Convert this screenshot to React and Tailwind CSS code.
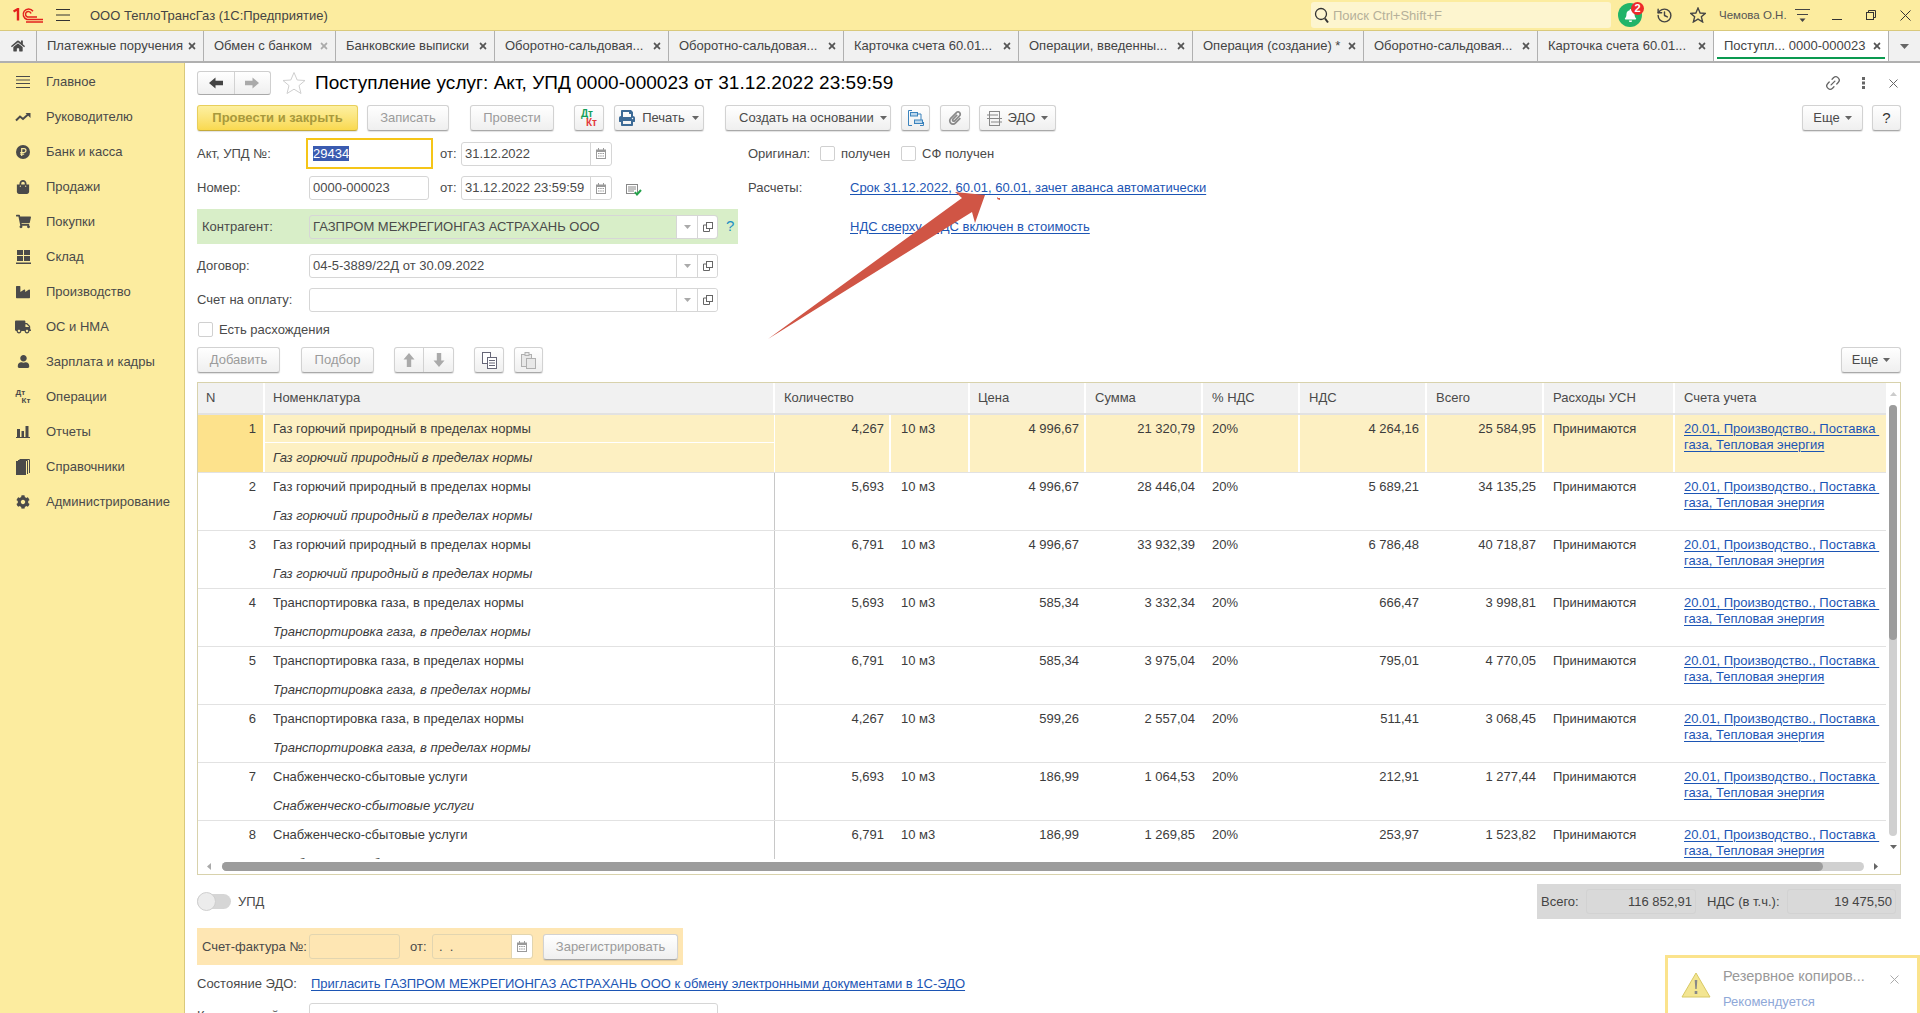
import React from "react";
import {
  FaHome,
  FaShoppingBag,
  FaShoppingCart,
  FaIndustry,
  FaTruck,
  FaUser,
  FaCog,
  FaPrint,
  FaPaperclip,
  FaBell,
  FaTimes,
} from "react-icons/fa";
import { FiLink2 } from "react-icons/fi";
import { LuHistory } from "react-icons/lu";

const tabs = [
  { title: "Платежные поручения", w: "w-[167px]" },
  { title: "Обмен с банком", w: "w-[132px]", faint: true },
  { title: "Банковские выписки", w: "w-[159px]" },
  { title: "Оборотно-сальдовая...", w: "w-[174px]" },
  { title: "Оборотно-сальдовая...", w: "w-[175px]" },
  { title: "Карточка счета 60.01...", w: "w-[175px]" },
  { title: "Операции, введенны...", w: "w-[174px]" },
  { title: "Операция (создание) *", w: "w-[171px]" },
  { title: "Оборотно-сальдовая...", w: "w-[174px]" },
  { title: "Карточка счета 60.01...", w: "w-[176px]" },
];

const GAS = "Газ горючий природный в пределах нормы";
const TRANS = "Транспортировка газа, в пределах нормы";
const SUPPLY = "Снабженческо-сбытовые услуги";

const rows = [
  [1, GAS, "4,267", "4 996,67", "21 320,79", "4 264,16", "25 584,95"],
  [2, GAS, "5,693", "4 996,67", "28 446,04", "5 689,21", "34 135,25"],
  [3, GAS, "6,791", "4 996,67", "33 932,39", "6 786,48", "40 718,87"],
  [4, TRANS, "5,693", "585,34", "3 332,34", "666,47", "3 998,81"],
  [5, TRANS, "6,791", "585,34", "3 975,04", "795,01", "4 770,05"],
  [6, TRANS, "4,267", "599,26", "2 557,04", "511,41", "3 068,45"],
  [7, SUPPLY, "5,693", "186,99", "1 064,53", "212,91", "1 277,44"],
  [8, SUPPLY, "6,791", "186,99", "1 269,85", "253,97", "1 523,82"],
];

function LinesIcon() {
  return (
    <svg width="14" height="14" viewBox="0 0 14 14" stroke="#4a4a4a" strokeWidth="1">
      <path d="M0 1.5h14M0 5h14M0 8.5h14M0 12.5h14" />
    </svg>
  );
}

function TrendIcon() {
  return (
    <svg width="16" height="10" viewBox="0 0 16 10" fill="none">
      <path d="M1 8.5 5 4.5 8 7l5-4.5" stroke="#4a4a4a" strokeWidth="2" />
      <path d="M10.5 1H15.5V6Z" fill="#4a4a4a" />
    </svg>
  );
}

function RubleIcon() {
  return (
    <svg width="14" height="14" viewBox="0 0 14 14">
      <circle cx="7" cy="7" r="7" fill="#4a4a4a" />
      <path d="M5.7 11V3.6H8a1.9 1.9 0 0 1 0 3.9H4.2M4.2 9.2h4" stroke="#fcec9f" strokeWidth="1.2" fill="none" />
    </svg>
  );
}

function StockIcon() {
  return (
    <svg width="15" height="14" viewBox="0 0 15 14" fill="#4a4a4a">
      <rect x="1" y="0" width="6" height="5" />
      <rect x="8" y="0" width="6" height="5" />
      <rect x="1" y="6" width="6" height="5" />
      <rect x="8" y="6" width="6" height="5" />
      <rect x="0" y="12.5" width="15" height="1.5" />
    </svg>
  );
}

function BarsIcon() {
  return (
    <svg width="14" height="12" viewBox="0 0 14 12" fill="#4a4a4a">
      <rect x="1" y="3" width="3" height="8" />
      <rect x="5.5" y="5" width="2.5" height="6" />
      <rect x="9.5" y="0" width="3" height="11" />
      <rect x="0" y="11" width="14" height="1" />
    </svg>
  );
}

function BooksIcon() {
  return (
    <svg width="14" height="16" viewBox="0 0 14 16">
      <rect x="0" y="2" width="10" height="14" fill="#4a4a4a" />
      <path d="M2 1.5h9.5V15M3.5.5h10V14" fill="none" stroke="#4a4a4a" strokeWidth="1" />
    </svg>
  );
}

function DebitCreditIcon({ big }) {
  if (big) {
    return (
      <div className="flex flex-col text-[10px] font-bold leading-[9px]">
        <span className="text-[#12a05a]">Дт</span>
        <span className="ml-[5px] text-[#e23a3a]">Кт</span>
      </div>
    );
  }
  return (
    <div className="flex flex-col text-[8px] font-bold leading-[8px] text-[#4a4a4a]">
      <span>Дт</span>
      <span className="ml-[6px]">Кт</span>
    </div>
  );
}

// толстая стрелка как в кнопках 1С, остальные направления поворотом
function FatArrow({ color = "#444", className = "" }) {
  return (
    <svg width="14" height="12" viewBox="0 0 14 12" className={className}>
      <path d="M0 6 6.500 .5V3.800H14V8.200H6.500V11.500Z" fill={color} />
    </svg>
  );
}

function Star({ size, color, width = 1 }) {
  return (
    <svg width={size} height={size} viewBox="0 0 24 24" fill="none" stroke={color} strokeWidth={width} className="shrink-0">
      <path d="M12 1.500 15.200 9 23 9.500 17 14.600 19 22.500 12 18.200 5 22.500 7 14.600 1 9.500 8.800 9Z" />
    </svg>
  );
}

const menu = [
  ["Главное", <LinesIcon />],
  ["Руководителю", <TrendIcon />],
  ["Банк и касса", <RubleIcon />],
  ["Продажи", <FaShoppingBag size={14} color="#4a4a4a" />],
  ["Покупки", <FaShoppingCart size={15} color="#4a4a4a" />],
  ["Склад", <StockIcon />],
  ["Производство", <FaIndustry size={14} color="#4a4a4a" />],
  ["ОС и НМА", <FaTruck size={16} color="#4a4a4a" />],
  ["Зарплата и кадры", <FaUser size={13} color="#4a4a4a" />],
  ["Операции", <DebitCreditIcon />],
  ["Отчеты", <BarsIcon />],
  ["Справочники", <BooksIcon />],
  ["Администрирование", <FaCog size={14} color="#4a4a4a" />],
];

function Caret({ color = "#666" }) {
  return (
    <svg width="7" height="4" viewBox="0 0 7 4" className="shrink-0">
      <path d="M0 0h7L3.500 4Z" fill={color} />
    </svg>
  );
}

function Btn({ className = "", muted, children }) {
  return (
    <div
      className={`flex h-[26px] shrink-0 items-center justify-center rounded-[3px] border border-[#d2d2d2] border-b-[#a9a9a9] bg-linear-to-b from-white to-[#efefef] shadow-[0_1px_1px_rgba(0,0,0,0.12)] ${
        muted ? "text-[#9b9b9b]" : "text-[#4a4a4a]"
      } ${className}`}
    >
      {children}
    </div>
  );
}

function Calendar() {
  return (
    <svg width="10" height="11" viewBox="0 0 10 11" fill="#9a9a9a">
      <path d="M0 1.500h2V0h1v1.500h4V0h1v1.500h2V11H0Zm1 2.500v6h8V4Z" />
      <path d="M2 5h1.500v1H2zM4.200 5h1.500v1H4.200zM6.500 5H8v1H6.500zM2 7.500h1.500v1H2zM4.200 7.500h1.500v1H4.200zM6.500 7.500H8v1H6.500z" />
    </svg>
  );
}

function OpenIcon() {
  return (
    <svg width="10" height="10" viewBox="0 0 10 10" fill="none" stroke="#666" strokeWidth="1">
      <rect x="3.500" y="0.500" width="6" height="6" />
      <path d="M3 3H0.500V9.500H6.500V7" />
    </svg>
  );
}

function DateField({ value }) {
  return (
    <div className="flex h-[24px] w-[151px] items-center rounded-[3px] border border-[#d6d6d6] bg-white">
      <span className="flex-1 pl-[3px]">{value}</span>
      <div className="flex h-full w-[21px] items-center justify-center border-l border-[#d6d6d6]">
        <Calendar />
      </div>
    </div>
  );
}

function SelectField({ value, className = "bg-white" }) {
  return (
    <div className={`flex h-[24px] w-[409px] items-center rounded-[3px] border border-[#d6d6d6] ${className}`}>
      <span className="flex-1 pl-[3px]">{value}</span>
      <div className="flex h-full w-[21px] items-center justify-center border-l border-[#d6d6d6] bg-white">
        <Caret color="#aaa" />
      </div>
      <div className="flex h-full w-[20px] items-center justify-center rounded-r-[3px] border-l border-[#d6d6d6] bg-white">
        <OpenIcon />
      </div>
    </div>
  );
}

function Check() {
  return <div className="h-[15px] w-[15px] shrink-0 rounded-[2px] border border-[#d0d0d0] bg-white" />;
}

function TopBar() {
  return (
    <div className="flex h-[31px] shrink-0 items-center border-b border-[#d9c97c] bg-[#fcec9f]">
      <svg width="30" height="15" viewBox="0 0 30 15" fill="none" stroke="#e3211c" className="ml-[13px]">
        <path d="M.5 3.500 5 1v11.500" strokeWidth="2.400" />
        <path d="M20 3.200A5.400 5.400 0 1 0 14 11.500H30" strokeWidth="1.500" />
        <path d="M18 5.500A2.800 2.800 0 1 0 14.500 9H24" strokeWidth="1.500" />
        <path d="M13 14H30" strokeWidth="1.500" />
      </svg>
      <svg width="14" height="12" viewBox="0 0 14 12" stroke="#333" strokeWidth="1" className="ml-[13px]">
        <path d="M0 .5h14M0 6h14M0 11.500h14" />
      </svg>
      <span className="ml-[20px] mt-[2px] w-[1221px] whitespace-pre text-[#444]">ООО ТеплоТрансГаз (1С:Предприятие)</span>
      <div className="flex h-[26px] w-[300px] items-center rounded-[3px] bg-[#fdf5cf] pl-[3px]">
        <svg width="16" height="17" viewBox="0 0 16 17" fill="none" stroke="#333" strokeWidth="1.300">
          <circle cx="7" cy="7" r="5.500" />
          <path d="M11 11.500l3 4" strokeWidth="2" />
        </svg>
        <span className="ml-[3px] mt-[1px] text-[#b5b09a]">Поиск Ctrl+Shift+F</span>
      </div>
      <div className="relative ml-[7px] flex h-[24px] w-[24px] items-center justify-center rounded-full bg-[#21b469]">
        <FaBell size={13} color="#fff" />
        <span className="absolute -right-[2px] -top-[1px] flex h-[13px] w-[13px] items-center justify-center rounded-full bg-[#ee2a2a] text-[11px] font-bold leading-none text-white">
          2
        </span>
      </div>
      <LuHistory size={17} color="#444" className="ml-[14px]" />
      <div className="ml-[17px]">
        <Star size={16} color="#444" width={2} />
      </div>
      <span className="ml-[13px] mt-[2px] w-[76px] text-[11.5px] text-[#555]">Чемова О.Н.</span>
      <svg width="15" height="13" viewBox="0 0 15 13">
        <path d="M0 .5h15M2 5.500h11" stroke="#444" strokeWidth="1" />
        <path d="M4.500 9.500h6L7.500 13Z" fill="#444" />
      </svg>
      <div className="ml-[22px] mt-[9px] h-[1px] w-[10px] bg-[#333]" />
      <svg width="10" height="10" viewBox="0 0 10 10" fill="none" stroke="#333" className="ml-[24px]">
        <rect x="0.500" y="2.500" width="7" height="7" />
        <path d="M2.500 2.500V.5h7v7H7.500" />
      </svg>
      <svg width="11" height="11" viewBox="0 0 11 11" stroke="#333" className="ml-[24px]">
        <path d="M.5.5l10 10M10.500.5l-10 10" />
      </svg>
    </div>
  );
}

function TabBar() {
  return (
    <div className="flex h-[32px] shrink-0 border-b-2 border-[#b0b0b0] bg-[#f1f1f1] text-[#444]">
      <div className="flex w-[37px] items-center justify-center border-r border-[#b0b0b0]">
        <FaHome size={14} color="#4a4a4a" />
      </div>
      {tabs.map((t, i) => (
        <div key={i} className={`flex items-center justify-between border-r border-[#b0b0b0] pl-[10px] pr-[6px] ${t.w}`}>
          <span className="whitespace-nowrap">{t.title}</span>
          <FaTimes size={10} color={t.faint ? "#aaa" : "#555"} />
        </div>
      ))}
      <div className="relative flex w-[175px] items-center justify-between border-r border-[#b0b0b0] bg-white pl-[10px] pr-[6px]">
        <span className="whitespace-pre">Поступл... 0000-000023</span>
        <FaTimes size={10} color="#555" />
        <div className="absolute bottom-[2px] left-[3px] right-[3px] h-[2px] bg-[#0a9a50]" />
      </div>
      <div className="flex flex-1 items-center justify-center">
        <svg width="9" height="5" viewBox="0 0 9 5"><path d="M0 0h9L4.500 5Z" fill="#666" /></svg>
      </div>
    </div>
  );
}

function Sidebar() {
  return (
    <div className="flex w-[185px] shrink-0 flex-col border-r border-[#d9c97c] bg-[#fcec9f] pt-[1px] text-[#4a4a4a]">
      {menu.map(([label, icon]) => (
        <div key={label} className="flex h-[35px] items-center">
          <div className="flex w-[46px] justify-center">{icon}</div>
          <span>{label}</span>
        </div>
      ))}
    </div>
  );
}

function Form() {
  return (
    <div className="mt-[7px] flex shrink-0">
      <div className="flex w-[551px] shrink-0 flex-col">
        <div className="flex h-[31px] items-center">
          <span className="w-[109px]">Акт, УПД №:</span>
          <div className="flex h-[31px] w-[127px] items-center border-2 border-[#f5c518] bg-white pl-[5px]">
            <span className="bg-[#3a5bb0] leading-[15px] text-white">29434</span>
          </div>
          <span className="ml-[7px] w-[21px]">от:</span>
          <DateField value="31.12.2022" />
        </div>
        <div className="mt-[7px] flex h-[24px] items-center">
          <span className="w-[112px]">Номер:</span>
          <div className="flex h-[24px] w-[120px] items-center rounded-[3px] border border-[#d6d6d6] pl-[3px]">0000-000023</div>
          <span className="ml-[11px] w-[21px]">от:</span>
          <DateField value="31.12.2022 23:59:59" />
          <svg width="16" height="12" viewBox="0 0 16 12" fill="none" className="ml-[14px] mt-[3px]">
            <rect x="0.500" y="0.500" width="11" height="9" stroke="#888" />
            <path d="M2 3h8M2 5h8M2 7h6" stroke="#888" />
            <path d="M9 8l2 2.500L15 6" stroke="#22a24a" strokeWidth="2" />
          </svg>
        </div>
        <div className="mt-[9px] flex h-[35px] w-[541px] items-center bg-[#d8eec8] pl-[5px]">
          <span className="w-[107px]">Контрагент:</span>
          <SelectField value="ГАЗПРОМ МЕЖРЕГИОНГАЗ АСТРАХАНЬ ООО" className="bg-[#d8eec8]" />
          <span className="ml-[8px] text-[15px] text-[#1d8fc4]">?</span>
        </div>
        <div className="mt-[10px] flex h-[24px] items-center">
          <span className="w-[112px]">Договор:</span>
          <SelectField value="04-5-3889/22Д от 30.09.2022" />
        </div>
        <div className="mt-[10px] flex h-[24px] items-center">
          <span className="w-[112px]">Счет на оплату:</span>
          <SelectField value="" />
        </div>
        <div className="ml-[1px] mt-[10px] flex h-[15px] items-center">
          <Check />
          <span className="ml-[6px]">Есть расхождения</span>
        </div>
      </div>
      <div className="flex flex-col">
        <div className="flex h-[31px] items-center">
          <span className="w-[72px]">Оригинал:</span>
          <Check />
          <span className="ml-[6px] w-[60px]">получен</span>
          <Check />
          <span className="ml-[6px]">СФ получен</span>
        </div>
        <div className="mt-[7px] flex h-[24px] items-center">
          <span className="w-[102px]">Расчеты:</span>
          <a className="text-[#1c55b4] underline underline-offset-2">Срок 31.12.2022, 60.01, 60.01, зачет аванса автоматически</a>
        </div>
        <div className="mt-[9px] flex h-[35px] items-center pl-[102px]">
          <a className="whitespace-pre text-[#1c55b4] underline underline-offset-2">НДС сверху,  НДС включен в стоимость</a>
        </div>
      </div>
    </div>
  );
}

function TableBar() {
  return (
    <div className="mt-[10px] flex shrink-0">
      <Btn muted className="w-[83px]">Добавить</Btn>
      <Btn muted className="ml-[21px] w-[73px]">Подбор</Btn>
      <Btn className="ml-[20px] w-[60px]">
        <div className="flex h-full w-[30px] items-center justify-center border-r border-[#d2d2d2]">
          <FatArrow color="#aaa" className="rotate-90" />
        </div>
        <div className="flex h-full w-[30px] items-center justify-center">
          <FatArrow color="#aaa" className="-rotate-90" />
        </div>
      </Btn>
      <Btn className="ml-[20px] w-[30px] border-[#b5b5b5]">
        <svg width="15" height="17" viewBox="0 0 15 17" fill="#fff" stroke="#667">
          <rect x="0.500" y="0.500" width="8" height="11" />
          <rect x="5.500" y="5.500" width="9" height="11" />
          <path d="M7 8.500h6M7 11h6M7 13.500h6" />
        </svg>
      </Btn>
      <Btn className="ml-[10px] w-[29px]">
        <svg width="15" height="17" viewBox="0 0 15 17" fill="#e8e8e8" stroke="#b0b0b0">
          <rect x="0.500" y="2.500" width="10" height="12" />
          <rect x="4" y="0.500" width="4" height="3" />
          <rect x="5.500" y="6.500" width="9" height="10" />
        </svg>
      </Btn>
      <Btn className="ml-auto w-[60px] gap-[5px]">Еще <Caret /></Btn>
    </div>
  );
}

const sep = "shadow-[inset_-2px_0_0_#fff]";

function TableHead() {
  const cell = "flex items-center border-r-2 border-white";
  return (
    <div className="flex h-[32px] shrink-0 border-b-2 border-[#e2e2e2] bg-[#f1f1f1] text-[#4a4a4a]">
      <div className={`${cell} w-[67px] pl-[8px]`}>N</div>
      <div className={`${cell} w-[510px] pl-[8px]`}>Номенклатура</div>
      <div className={`${cell} w-[195px] pl-[9px]`}>Количество</div>
      <div className={`${cell} w-[116px] pl-[8px]`}>Цена</div>
      <div className={`${cell} w-[117px] pl-[9px]`}>Сумма</div>
      <div className={`${cell} w-[97px] pl-[9px]`}>% НДС</div>
      <div className={`${cell} w-[127px] pl-[9px]`}>НДС</div>
      <div className={`${cell} w-[117px] pl-[9px]`}>Всего</div>
      <div className={`${cell} w-[131px] pl-[9px]`}>Расходы УСН</div>
      <div className="flex w-[211px] items-center pl-[9px]">Счета учета</div>
    </div>
  );
}

function Row({ r, active }) {
  const [n, name, qty, price, sum, vat, total] = r;
  const div = active ? sep : "";
  const num = "pt-[6px] text-right leading-[16px]";
  const txt = "pl-[9px] pt-[6px] leading-[16px]";
  return (
    <div className={`flex h-[58px] shrink-0 border-b border-[#e2e2e2] text-[#3c3c3c] ${active ? "bg-[#fdf0c2]" : "bg-white"}`}>
      <div className={`w-[67px] pr-[9px] ${num} ${active ? "bg-[#fde28c] " + sep : ""}`}>{n}</div>
      <div className={`flex w-[510px] flex-col border-r ${active ? "border-r-white" : "border-r-[#c8c8c8]"}`}>
        <div className={`h-[28px] pl-[8px] pt-[6px] leading-[16px] ${active ? "border-b border-white" : ""}`}>{name}</div>
        <div className="pl-[8px] pt-[7px] italic leading-[16px]">{name}</div>
      </div>
      <div className={`w-[116px] pr-[7px] ${num} ${div}`}>{qty}</div>
      <div className={`w-[79px] pl-[10px] pt-[6px] leading-[16px] ${div}`}>10 м3</div>
      <div className={`w-[116px] pr-[7px] ${num} ${div}`}>{price}</div>
      <div className={`w-[117px] pr-[8px] ${num} ${div}`}>{sum}</div>
      <div className={`w-[97px] ${txt} ${div}`}>20%</div>
      <div className={`w-[127px] pr-[8px] ${num} ${div}`}>{vat}</div>
      <div className={`w-[117px] pr-[8px] ${num} ${div}`}>{total}</div>
      <div className={`w-[131px] ${txt} ${div}`}>Принимаются</div>
      <div className="w-[211px] whitespace-pre pl-[9px] pt-[6px] leading-[16px] text-[#1c55b4]">
        <a className="underline underline-offset-2">{"20.01, Производство., Поставка "}</a>
        <br />
        <a className="underline underline-offset-2">газа, Тепловая энергия</a>
      </div>
    </div>
  );
}

function Table() {
  return (
    <div className="mt-[9px] flex h-[493px] shrink-0 flex-col border border-[#d8d2ac]">
      <div className="flex h-[476px]">
        <div className="flex w-[1688px] flex-col overflow-hidden">
          <TableHead />
          {rows.map((r, i) => (
            <Row key={r[0]} r={r} active={i === 0} />
          ))}
        </div>
        <div className="flex w-[14px] flex-col items-center pt-[9px]">
          <svg width="7" height="4" viewBox="0 0 7 4"><path d="M0 4h7L3.500 0Z" fill="#ccc" /></svg>
          <div className="mt-[9px] flex h-[431px] w-[8px] flex-col rounded-full bg-[#d0d0d0]">
            <div className="h-[235px] w-[8px] rounded-full bg-[#9c9c9c]" />
          </div>
          <svg width="7" height="4" viewBox="0 0 7 4" className="mt-[9px]"><path d="M0 0h7L3.500 4Z" fill="#666" /></svg>
        </div>
      </div>
      <div className="flex h-[15px] items-center pl-[9px]">
        <svg width="4" height="7" viewBox="0 0 4 7"><path d="M4 0v7L0 3.500Z" fill="#aaa" /></svg>
        <div className="ml-[11px] h-[9px] w-[1642px] rounded-full bg-[#d0d0d0]">
          <div className="h-[9px] w-[1601px] rounded-full bg-[#9c9c9c]" />
        </div>
        <svg width="4" height="7" viewBox="0 0 4 7" className="ml-[10px]"><path d="M0 0v7l4-3.500Z" fill="#666" /></svg>
      </div>
    </div>
  );
}

function Totals() {
  return (
    <div className="mt-[9px] flex h-[35px] shrink-0 items-start justify-between">
      <div className="mt-[8px] flex h-[19px] items-center">
        <div className="flex h-[15px] w-[34px] items-center rounded-full bg-[#d6d6d6]">
          <div className="h-[19px] w-[19px] shrink-0 rounded-full border border-[#cfcfcf] bg-[#ececec]" />
        </div>
        <span className="ml-[7px]">УПД</span>
      </div>
      <div className="flex h-[35px] w-[364px] items-center bg-[#d9d9d9] pl-[4px] pr-[5px] text-[#444]">
        <span className="w-[45px]">Всего:</span>
        <div className="h-[25px] w-[110px] rounded-[3px] border border-[#d2d2d2] pr-[3px] text-right leading-[23px]">116 852,91</div>
        <span className="ml-[11px] w-[80px]">НДС (в т.ч.):</span>
        <div className="h-[25px] w-[109px] rounded-[3px] border border-[#d2d2d2] pr-[3px] text-right leading-[23px]">19 475,50</div>
      </div>
    </div>
  );
}

function Invoice() {
  return (
    <div className="mt-[9px] flex h-[37px] w-[486px] shrink-0 items-center bg-[#fee6b3] pl-[5px]">
      <span className="w-[107px] whitespace-nowrap">Счет-фактура №:</span>
      <div className="h-[25px] w-[91px] rounded-[3px] border border-[#e2d5b0] bg-[#fee6b3]" />
      <span className="ml-[10px] w-[22px]">от:</span>
      <div className="flex h-[25px] w-[101px] items-center rounded-[3px] border border-[#e2d5b0]">
        <span className="flex-1 whitespace-pre pl-[6px]">.  .</span>
        <div className="flex h-full w-[21px] items-center justify-center rounded-r-[3px] border-l border-[#e2d5b0] bg-white">
          <Calendar />
        </div>
      </div>
      <Btn muted className="ml-[10px] w-[135px]">Зарегистрировать</Btn>
    </div>
  );
}

export default function App() {
  return (
    <div className="relative flex h-[1013px] w-[1920px] flex-col overflow-hidden bg-white font-['Liberation_Sans',Arial,sans-serif] text-[13px] text-[#4a4a4a]">
      <TopBar />
      <TabBar />
      <div className="flex min-h-0 flex-1">
        <Sidebar />
        <div className="flex min-w-0 flex-1 flex-col pl-[12px] pr-[19px]">
          <div className="mt-[8px] flex h-[24px] shrink-0 items-center">
            <div className="flex h-[24px] w-[74px] rounded-[3px] border border-[#cfcfcf] border-b-[#a9a9a9] bg-linear-to-b from-white to-[#efefef]">
              <div className="flex w-[37px] items-center justify-center border-r border-[#d2d2d2]">
                <FatArrow color="#444" />
              </div>
              <div className="flex w-[36px] items-center justify-center">
                <FatArrow color="#aaa" className="rotate-180" />
              </div>
            </div>
            <div className="ml-[11px]">
              <Star size={24} color="#cfcfcf" />
            </div>
            <h1 className="ml-[9px] text-[19px] font-normal tracking-[0.04px] text-black">Поступление услуг: Акт, УПД 0000-000023 от 31.12.2022 23:59:59</h1>
            <FiLink2 size={16} color="#666" className="ml-auto mr-[21px] -rotate-45" />
            <svg width="3" height="12" viewBox="0 0 3 12" fill="#666" className="mr-[24px]">
              <rect y="0" width="3" height="3" />
              <rect y="4.500" width="3" height="3" />
              <rect y="9" width="3" height="3" />
            </svg>
            <svg width="9" height="9" viewBox="0 0 9 9" stroke="#666" className="mr-[3px]">
              <path d="M.5.5l8 8M8.500.5l-8 8" />
            </svg>
          </div>

          <div className="mt-[10px] flex shrink-0">
            <div className="flex h-[26px] w-[161px] shrink-0 items-center justify-center rounded-[3px] border border-[#e8cf5c] border-b-[#c4aa3a] bg-linear-to-b from-[#fdf0a0] to-[#f9d94e] font-bold text-[#a8993c] shadow-[0_1px_1px_rgba(0,0,0,0.12)]">
              Провести и закрыть
            </div>
            <Btn muted className="ml-[9px] w-[82px]">Записать</Btn>
            <Btn muted className="ml-[21px] w-[84px]">Провести</Btn>
            <Btn className="ml-[20px] w-[30px]"><DebitCreditIcon big /></Btn>
            <Btn className="ml-[10px] w-[90px] gap-[7px]">
              <FaPrint size={16} color="#3c6a96" />
              Печать
              <Caret />
            </Btn>
            <Btn className="ml-[21px] w-[166px] justify-start gap-[6px] pl-[13px]">Создать на основании <Caret /></Btn>
            <Btn className="ml-[10px] w-[29px]">
              <svg width="16" height="16" viewBox="0 0 16 16" fill="none" stroke="#3b83bd">
                <path d="M4 .5H.5V15.500H4M12 15.500h3.500V12" />
                <rect x="2.500" y="2.500" width="7" height="3.500" fill="#bcd7ec" />
                <rect x="6.500" y="10" width="8" height="3.500" fill="#bcd7ec" />
                <path d="M9.500 4H13v6" />
              </svg>
            </Btn>
            <Btn className="ml-[10px] w-[30px]"><FaPaperclip size={14} color="#8a8a8a" /></Btn>
            <Btn className="ml-[9px] w-[77px] gap-[6px]">
              <svg width="15" height="15" viewBox="0 0 15 15" fill="none" stroke="#888">
                <rect x="2.500" y="0.500" width="10" height="14" />
                <path d="M0 4h5M0 7.500h15M10 11h5M5 4h6M4 11h6" />
              </svg>
              ЭДО
              <Caret />
            </Btn>
            <Btn className="ml-auto w-[61px] gap-[5px]">Еще <Caret /></Btn>
            <Btn className="ml-[9px] w-[29px] text-[15px] text-[#333]">?</Btn>
          </div>

          <Form />
          <TableBar />
          <Table />
          <Totals />
          <Invoice />
          <div className="mt-[10px] flex h-[18px] shrink-0 items-center">
            <span className="w-[114px]">Состояние ЭДО:</span>
            <a className="text-[#1c55b4] underline underline-offset-2">Пригласить ГАЗПРОМ МЕЖРЕГИОНГАЗ АСТРАХАНЬ ООО к обмену электронными документами в 1С-ЭДО</a>
          </div>
          <div className="mt-[10px] flex shrink-0 items-start">
            <span className="mt-[3px] w-[112px]">Комментарий:</span>
            <div className="h-[24px] w-[409px] shrink-0 rounded-[3px] border border-[#d6d6d6]" />
          </div>
        </div>
      </div>

      {/* стрелка поверх формы */}
      <svg width="1920" height="1013" viewBox="0 0 1920 1013" className="pointer-events-none absolute left-0 top-0">
        <path d="M768 339 962 198 955 192 985 195 975 223 972 212Z" fill="#d05545" />
        <path d="M997 197l3 1 0 2-3-1 1-2" fill="#d05545" />
      </svg>

      {/* уведомление */}
      <div className="absolute left-[1665px] top-[955px] flex h-[58px] w-[255px] items-start border-[3px] border-b-0 border-[#fbe38c] bg-white pl-[13px] pt-[14px]">
        <svg width="30" height="26" viewBox="0 0 30 26" className="shrink-0">
          <path d="M15 1 29 25H1Z" fill="#f3e591" stroke="#d8c964" />
          <path d="M13.700 8h2.600l-.6 9h-1.400ZM13.700 19h2.600v3h-2.600Z" fill="#888" />
        </svg>
        <div className="ml-[12px] flex w-[155px] flex-col">
          <span className="-mt-[6px] whitespace-nowrap text-[14.5px] text-[#999]">Резервное копиров...</span>
          <span className="mt-[4px] text-[#8fa8d8]">Рекомендуется</span>
        </div>
        <svg width="9" height="9" viewBox="0 0 9 9" stroke="#aaa" className="ml-[12px] mt-[3px]">
          <path d="M.5.5l8 8M8.500.5l-8 8" />
        </svg>
      </div>
    </div>
  );
}
